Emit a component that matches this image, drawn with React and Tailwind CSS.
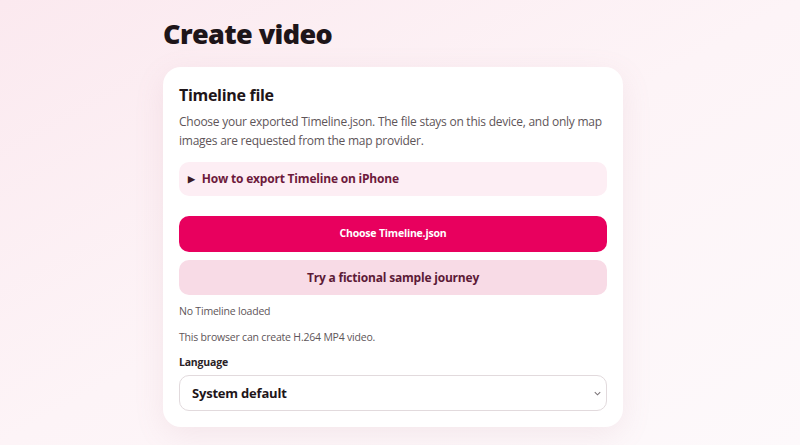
export default function App() {
  return (
    <div
      className="min-h-[445px] w-full bg-gradient-to-br from-[#fbe9ef] via-[#fdf4f7] to-[#fdf9fb] flex justify-center pr-[14px]"
      style={{ fontFamily: '"Open Sans", "Noto Sans", sans-serif' }}
    >
      <div className="w-[460px] pt-[14px]">
        <h1 className="text-[27px] leading-[40px] font-extrabold text-[#1e1519] tracking-[-0.6px]">Create video</h1>
        <div className="mt-[13px] bg-white rounded-[18px] shadow-[0_8px_30px_rgba(180,120,140,0.12)] px-4 pt-[17px] pb-4">
          <h2 className="text-[16px] leading-[22px] font-bold text-[#1e1519] tracking-[-0.3px]">Timeline file</h2>
          <p className="mt-[6px] text-[12px] leading-[19px] text-[#5e5559] tracking-[-0.25px]">
            Choose your exported Timeline.json. The file stays on this device, and only map images are requested from the map provider.
          </p>
          <div className="mt-[12px] h-[34px] rounded-[10px] bg-[#fdeef4] flex items-center px-[9px] text-[12px] font-bold text-[#6d1a3c] tracking-[-0.2px]">
            <span className="text-[9px] mr-[7px] text-[#3a1a26]">▶</span>
            How to export Timeline on iPhone
          </div>
          <button className="mt-[20px] w-full h-[36px] rounded-[10px] bg-[#e8005e] text-white text-[10.5px] font-bold flex items-center justify-center tracking-[-0.2px]">
            Choose Timeline.json
          </button>
          <button className="mt-[8px] w-full h-[35px] rounded-[10px] bg-[#f8dbe6] text-[#5c1a36] text-[12px] font-bold flex items-center justify-center tracking-[-0.2px]">
            Try a fictional sample journey
          </button>
          <p className="mt-[9px] text-[10.5px] leading-[15px] text-[#5e5559] tracking-[-0.2px]">No Timeline loaded</p>
          <p className="mt-[11px] text-[10.5px] leading-[15px] text-[#5e5559] tracking-[-0.2px]">This browser can create H.264 MP4 video.</p>
          <p className="mt-[10px] text-[10.5px] leading-[15px] font-bold text-[#2a2226] tracking-[-0.2px]">Language</p>
          <div className="mt-[5px] h-[36px] rounded-[10px] border border-[#e2dadd] flex items-center justify-between pl-[12px] pr-[5px]">
            <span className="text-[13px] font-bold text-[#1e1519] tracking-[-0.2px] mt-[2px]">System default</span>
            <svg width="7" height="5" viewBox="0 0 9 6" fill="none" stroke="#7a7377" strokeWidth="1.3">
              <path d="M1 1.2l3.5 3.5 3.5-3.5" />
            </svg>
          </div>
        </div>
      </div>
    </div>
  );
}
